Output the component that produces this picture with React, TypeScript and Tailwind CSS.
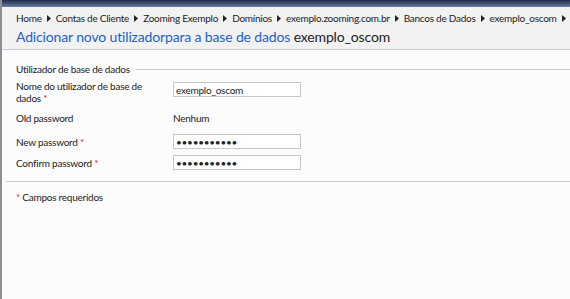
import React from "react";

const crumbs = [
  "Home",
  "Contas de Cliente",
  "Zooming Exemplo",
  "Domínios",
  "exemplo.zooming.com.br",
  "Bancos de Dados",
  "exemplo_oscom",
];

const font = { fontFamily: "Lato, 'Open Sans', sans-serif" };

function Arrow() {
  return (
    <svg width="4" height="7" viewBox="0 0 4 7" className="mx-[5px] shrink-0">
      <path d="M0 0 L4 3.5 L0 7 Z" fill="#222" />
    </svg>
  );
}

function Req() {
  return (
    <>
      {" "}
      <span className="text-[#d22] tracking-normal">*</span>
    </>
  );
}

const inputCls =
  "w-[128px] h-[15px] border border-[#c8c8c8] bg-white px-[2px] text-[10px] tracking-[-0.25px] text-[#222] outline-none";

export default function App() {
  return (
    <div className="w-[570px] h-[299px] bg-[#fcfcfc] border-l-2 border-[#8a8f98] text-[#222] overflow-hidden" style={font}>
      <div className="h-[7px] bg-gradient-to-b from-[#1f2c4a] to-[#6d7fa3]" />
      <div className="bg-[#f2f2f2] border-b border-[#c9ccd1] pl-[14px] pt-[4px] pb-[2px]">
        <div className="flex items-center whitespace-nowrap text-[10px] leading-[14px] tracking-[-0.25px]">
          {crumbs.map((c) => (
            <React.Fragment key={c}>
              <span>{c}</span>
              <Arrow />
            </React.Fragment>
          ))}
        </div>
        <div className="whitespace-nowrap text-[14px] leading-[20px] tracking-[-0.15px] mt-[2px]">
          <span className="text-[#1f5fc8]">Adicionar novo utilizadorpara a base de dados</span>{" "}
          <span>exemplo_oscom</span>
        </div>
      </div>

      <div className="pl-[14px] pt-[13px] text-[10px] leading-[12px] tracking-[-0.25px]">
        <div className="flex items-center">
          <span>Utilizador de base de dados</span>
          <div className="flex-1 h-px bg-[#c9ccd1] ml-[6px]" />
        </div>

        <div className="flex mt-[5px]">
          <div className="w-[140px] mr-[17px] whitespace-nowrap">
            <div>Nome do utilizador de base de</div>
            <div>
              dados<Req />
            </div>
          </div>
          <input className={`${inputCls} mt-[2px]`} defaultValue="exemplo_oscom" style={font} />
        </div>

        <div className="flex mt-[8px]">
          <div className="w-[157px]">Old password</div>
          <div>Nenhum</div>
        </div>

        <div className="flex items-center mt-[10px]">
          <div className="w-[157px]">
            New password<Req />
          </div>
          <input type="password" className={inputCls} defaultValue="exemplo1234" />
        </div>

        <div className="flex items-center mt-[6px]">
          <div className="w-[157px]">
            Confirm password<Req />
          </div>
          <input type="password" className={inputCls} defaultValue="exemplo1234" />
        </div>
      </div>

      <div className="h-px bg-[#c9ccd1] ml-[4px] mt-[11px]" />

      <div className="pl-[14px] pt-[9px] text-[10px] leading-[12px] tracking-[-0.25px]">
        <span className="text-[#d22]">*</span> Campos requeridos
      </div>
    </div>
  );
}
